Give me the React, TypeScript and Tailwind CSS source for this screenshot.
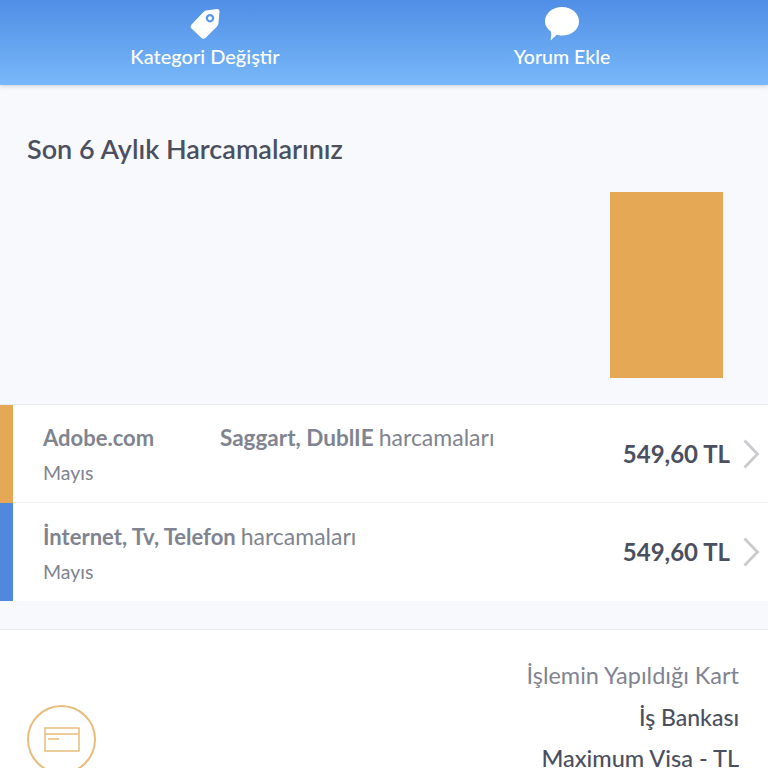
const font = "font-['Lato','Noto_Sans',sans-serif]";

const TagIcon = () => (
    <svg width="34" height="34" viewBox="0 0 34 34">
        <path
            fillRule="evenodd"
            fill="#fff"
            d="M18 3.5 L29 2 Q31.5 2 31.5 4.5 L30.5 16 Q30.3 18 29 19.5 L17.5 31 Q15.5 32.6 13.5 31 L3.5 21.5 Q1.8 19.5 3.5 17.5 L15 5.5 Q16.3 4 18 3.5 Z M22 7 a4.2 4.2 0 1 0 0.01 0 Z M22 9.2 a2 2 0 1 1 -0.01 0 Z"
        />
    </svg>
);

const BubbleIcon = () => (
    <svg width="36" height="36" viewBox="0 0 36 36">
        <path
            fill="#fff"
            d="M18 1 C28 1 35 7.5 35 15.5 C35 23.5 27.5 29.5 18 29.5 C15.5 29.5 14 29.2 12.5 28.8 C10.5 31 8 33.5 6.5 34.5 C7 32 7.5 28.5 7 25.8 C3.2 23 1 19.5 1 15.5 C1 7.5 8 1 18 1 Z"
        />
    </svg>
);

const Chevron = () => (
    <svg width="18" height="30" viewBox="0 0 18 30" fill="none" stroke="#c9cbce" strokeWidth="2.8" className="ml-[12px] mb-[2px]">
        <path d="M2.5 1.5 L15.5 15 L2.5 28.5" />
    </svg>
);

interface Expense {
    id: number;
    bar: string;
    bold: string;
    place?: string;
}

const expenses: Expense[] = [
    { id: 1, bar: "bg-[#e5a955]", bold: "Adobe.com", place: "Saggart, DublIE" },
    { id: 2, bar: "bg-[#5088dd]", bold: "İnternet, Tv, Telefon" },
];

const ExpenseRow = ({ expense, last }: { expense: Expense; last: boolean }) => (
    <div className="flex h-[98px] bg-white">
        <div className={`w-[13px] ${expense.bar}`} />
        <div className={`flex-1 flex items-center pl-[30px] pr-[8px] pt-[2px] ${last ? "" : "border-b border-[#eef0f3]"}`}>
            <div className="flex-1">
                <div className="flex items-baseline text-[22px] leading-[26px] text-[#7f8490]">
                    <span className={`font-bold ${expense.place ? "w-[177px]" : "mr-[5px]"}`}>{expense.bold}</span>
                    {expense.place && <span className="font-bold mr-[5px] text-[22.5px]">{expense.place}</span>}
                    <span className="text-[23px]">harcamaları</span>
                </div>
                <div className="mt-[10px] text-[19.5px] leading-[24px] text-[#7f8490]">Mayıs</div>
            </div>
            <span className="mb-[2px] text-[24px] font-bold text-[#4b5060]">549,60 TL</span>
            <Chevron />
        </div>
    </div>
);

function App() {
    return (
        <div className={`h-[768px] overflow-hidden bg-[#f8f9fc] ${font}`}>
            <header className="h-[85px] flex bg-gradient-to-b from-[#4f8ee5] to-[#79b8f9] shadow-[0_1px_4px_rgba(0,0,0,0.18)] text-white font-medium">
                <div className="w-[410px] flex flex-col items-center pt-[7px] text-[20px]">
                    <TagIcon />
                    <span className="mt-[2px] leading-[26px]">Kategori Değiştir</span>
                </div>
                <div className="w-[304px] flex flex-col items-center pt-[6px] text-[19.5px]">
                    <BubbleIcon />
                    <span className="mt-[2px] leading-[26px]">Yorum Ekle</span>
                </div>
            </header>

            <section className="h-[320px] pl-[27px] pr-[45px] pt-[46px] border-b border-[#e9ebef]">
                <h1 className="text-[27px] leading-[36px] font-semibold text-[#4b5060]">Son 6 Aylık Harcamalarınız</h1>
                <div className="flex justify-end mt-[25px]">
                    <div className="w-[113px] h-[186px] bg-[#e5a955]" />
                </div>
            </section>

            <div>
                {expenses.map((expense, i) => (
                    <ExpenseRow key={expense.id} expense={expense} last={i === expenses.length - 1} />
                ))}
            </div>

            <section className="mt-[28px] bg-white border-t border-[#e9ebef] h-[200px] flex justify-between pl-[27px] pr-[29px]">
                <div className="mt-[75px] w-[69px] h-[69px] shrink-0 rounded-full border-2 border-[#e8bd7c] flex items-center justify-center">
                    <svg width="36" height="28" viewBox="0 0 36 28" fill="none" stroke="#e8bd7c" strokeWidth="1.5">
                        <rect x="1" y="2" width="34" height="23" />
                        <path d="M1 8 H35" />
                        <path d="M4 13 H15" />
                    </svg>
                </div>
                <div className="pt-[29px] text-right">
                    <div className="text-[23.5px] leading-[32px] text-[#7f8490]">İşlemin Yapıldığı Kart</div>
                    <div className="mt-[10px] text-[23px] leading-[32px] font-medium text-[#4b5060]">İş Bankası</div>
                    <div className="mt-[9px] text-[23.5px] leading-[32px] font-medium text-[#4b5060]">Maximum Visa - TL</div>
                </div>
            </section>
        </div>
    );
}

export default App;
